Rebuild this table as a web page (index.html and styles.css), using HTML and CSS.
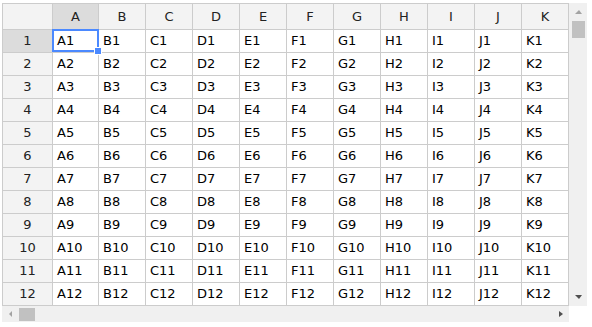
FILE: index.html
```html
<!DOCTYPE html>
<html>
<head>
<meta charset="utf-8">
<link rel="stylesheet" href="styles.css">
</head>
<body>
<div class="sheet">
  <div class="main">
    <div class="grid">
      <div class="ch corner"></div><div class="ch hl">A</div><div class="ch">B</div><div class="ch">C</div><div class="ch">D</div><div class="ch">E</div><div class="ch">F</div><div class="ch">G</div><div class="ch">H</div><div class="ch">I</div><div class="ch">J</div><div class="ch">K</div>
      <div class="rh hl">1</div><div class="c sel">A1</div><div class="c">B1</div><div class="c">C1</div><div class="c">D1</div><div class="c">E1</div><div class="c">F1</div><div class="c">G1</div><div class="c">H1</div><div class="c">I1</div><div class="c">J1</div><div class="c">K1</div>
      <div class="rh">2</div><div class="c">A2</div><div class="c">B2</div><div class="c">C2</div><div class="c">D2</div><div class="c">E2</div><div class="c">F2</div><div class="c">G2</div><div class="c">H2</div><div class="c">I2</div><div class="c">J2</div><div class="c">K2</div>
      <div class="rh">3</div><div class="c">A3</div><div class="c">B3</div><div class="c">C3</div><div class="c">D3</div><div class="c">E3</div><div class="c">F3</div><div class="c">G3</div><div class="c">H3</div><div class="c">I3</div><div class="c">J3</div><div class="c">K3</div>
      <div class="rh">4</div><div class="c">A4</div><div class="c">B4</div><div class="c">C4</div><div class="c">D4</div><div class="c">E4</div><div class="c">F4</div><div class="c">G4</div><div class="c">H4</div><div class="c">I4</div><div class="c">J4</div><div class="c">K4</div>
      <div class="rh">5</div><div class="c">A5</div><div class="c">B5</div><div class="c">C5</div><div class="c">D5</div><div class="c">E5</div><div class="c">F5</div><div class="c">G5</div><div class="c">H5</div><div class="c">I5</div><div class="c">J5</div><div class="c">K5</div>
      <div class="rh">6</div><div class="c">A6</div><div class="c">B6</div><div class="c">C6</div><div class="c">D6</div><div class="c">E6</div><div class="c">F6</div><div class="c">G6</div><div class="c">H6</div><div class="c">I6</div><div class="c">J6</div><div class="c">K6</div>
      <div class="rh">7</div><div class="c">A7</div><div class="c">B7</div><div class="c">C7</div><div class="c">D7</div><div class="c">E7</div><div class="c">F7</div><div class="c">G7</div><div class="c">H7</div><div class="c">I7</div><div class="c">J7</div><div class="c">K7</div>
      <div class="rh">8</div><div class="c">A8</div><div class="c">B8</div><div class="c">C8</div><div class="c">D8</div><div class="c">E8</div><div class="c">F8</div><div class="c">G8</div><div class="c">H8</div><div class="c">I8</div><div class="c">J8</div><div class="c">K8</div>
      <div class="rh">9</div><div class="c">A9</div><div class="c">B9</div><div class="c">C9</div><div class="c">D9</div><div class="c">E9</div><div class="c">F9</div><div class="c">G9</div><div class="c">H9</div><div class="c">I9</div><div class="c">J9</div><div class="c">K9</div>
      <div class="rh">10</div><div class="c">A10</div><div class="c">B10</div><div class="c">C10</div><div class="c">D10</div><div class="c">E10</div><div class="c">F10</div><div class="c">G10</div><div class="c">H10</div><div class="c">I10</div><div class="c">J10</div><div class="c">K10</div>
      <div class="rh">11</div><div class="c">A11</div><div class="c">B11</div><div class="c">C11</div><div class="c">D11</div><div class="c">E11</div><div class="c">F11</div><div class="c">G11</div><div class="c">H11</div><div class="c">I11</div><div class="c">J11</div><div class="c">K11</div>
      <div class="rh">12</div><div class="c">A12</div><div class="c">B12</div><div class="c">C12</div><div class="c">D12</div><div class="c">E12</div><div class="c">F12</div><div class="c">G12</div><div class="c">H12</div><div class="c">I12</div><div class="c">J12</div><div class="c">K12</div>
    </div>
    <div class="vscroll">
      <span class="arrow up"></span>
      <span class="vthumb"></span>
      <span class="vspace"></span>
      <span class="arrow down"></span>
    </div>
  </div>
  <div class="bottom">
    <div class="hscroll">
      <span class="arrow left"></span>
      <span class="hthumb"></span>
      <span class="hspace"></span>
      <span class="arrow right"></span>
    </div>
  </div>
</div>
</body>
</html>
```
FILE: styles.css
```css
html, body {
  margin: 0;
  padding: 0;
  background: #fff;
}
.sheet {
  padding: 3px 0 0 2px;
  font-family: "DejaVu Sans", Verdana, sans-serif;
  font-size: 13px;
}
.main {
  display: flex;
}
.grid {
  display: grid;
  grid-template-columns: 50px 46px repeat(10, 47px);
  grid-template-rows: 26px repeat(12, 23px);
  border-left: 1px solid #cccccc;
  border-top: 1px solid #cccccc;
}
.grid > div {
  box-sizing: border-box;
  border-right: 1px solid #cccccc;
  border-bottom: 1px solid #cccccc;
  white-space: nowrap;
  overflow: visible;
}
.ch {
  background: #f3f3f3;
  color: #222;
  text-align: center;
  line-height: 25px;
}
.rh {
  background: #f3f3f3;
  color: #222;
  text-align: center;
  line-height: 22px;
}
.hl {
  background: #dcdcdc !important;
}
.c {
  color: #000;
  padding-left: 4px;
  line-height: 22px;
}
.sel {
  position: relative;
}
.sel::before {
  content: "";
  position: absolute;
  left: -1px;
  top: -1px;
  width: 47px;
  height: 23px;
  box-sizing: border-box;
  border: 2px solid #4b89ff;
}
.sel::after {
  content: "";
  position: absolute;
  left: 42px;
  top: 18px;
  width: 6px;
  height: 6px;
  box-sizing: border-box;
  background: #4b89ff;
  outline: 1px solid #fff;
  z-index: 2;
}
.vscroll {
  width: 18px;
  height: 303px;
  background: #f0f0f0;
  display: flex;
  flex-direction: column;
  align-items: center;
}
.vthumb {
  width: 13px;
  height: 17px;
  background: #c1c1c1;
  margin-top: 7px;
  margin-left: 1px;
}
.vspace, .hspace {
  flex: 1;
}
.arrow {
  width: 0;
  height: 0;
  display: block;
}
.up {
  margin-top: 7px;
  border-left: 4px solid transparent;
  border-right: 3px solid transparent;
  border-bottom: 4px solid #a3a3a3;
  margin-left: 1px;
}
.down {
  margin-bottom: 7px;
  border-left: 4px solid transparent;
  border-right: 3px solid transparent;
  border-top: 4px solid #505050;
  margin-left: 1px;
}
.bottom {
  display: flex;
}
.hscroll {
  width: 567px;
  height: 16px;
  background: #f0f0f0;
  display: flex;
  align-items: center;
}
.hthumb {
  width: 16px;
  height: 13px;
  background: #c1c1c1;
  margin-left: 7px;
}
.left {
  margin-left: 7px;
  border-top: 3px solid transparent;
  border-bottom: 3px solid transparent;
  border-right: 3px solid #a3a3a3;
}
.right {
  margin-right: 6px;
  border-top: 3px solid transparent;
  border-bottom: 3px solid transparent;
  border-left: 4px solid #505050;
}
```
